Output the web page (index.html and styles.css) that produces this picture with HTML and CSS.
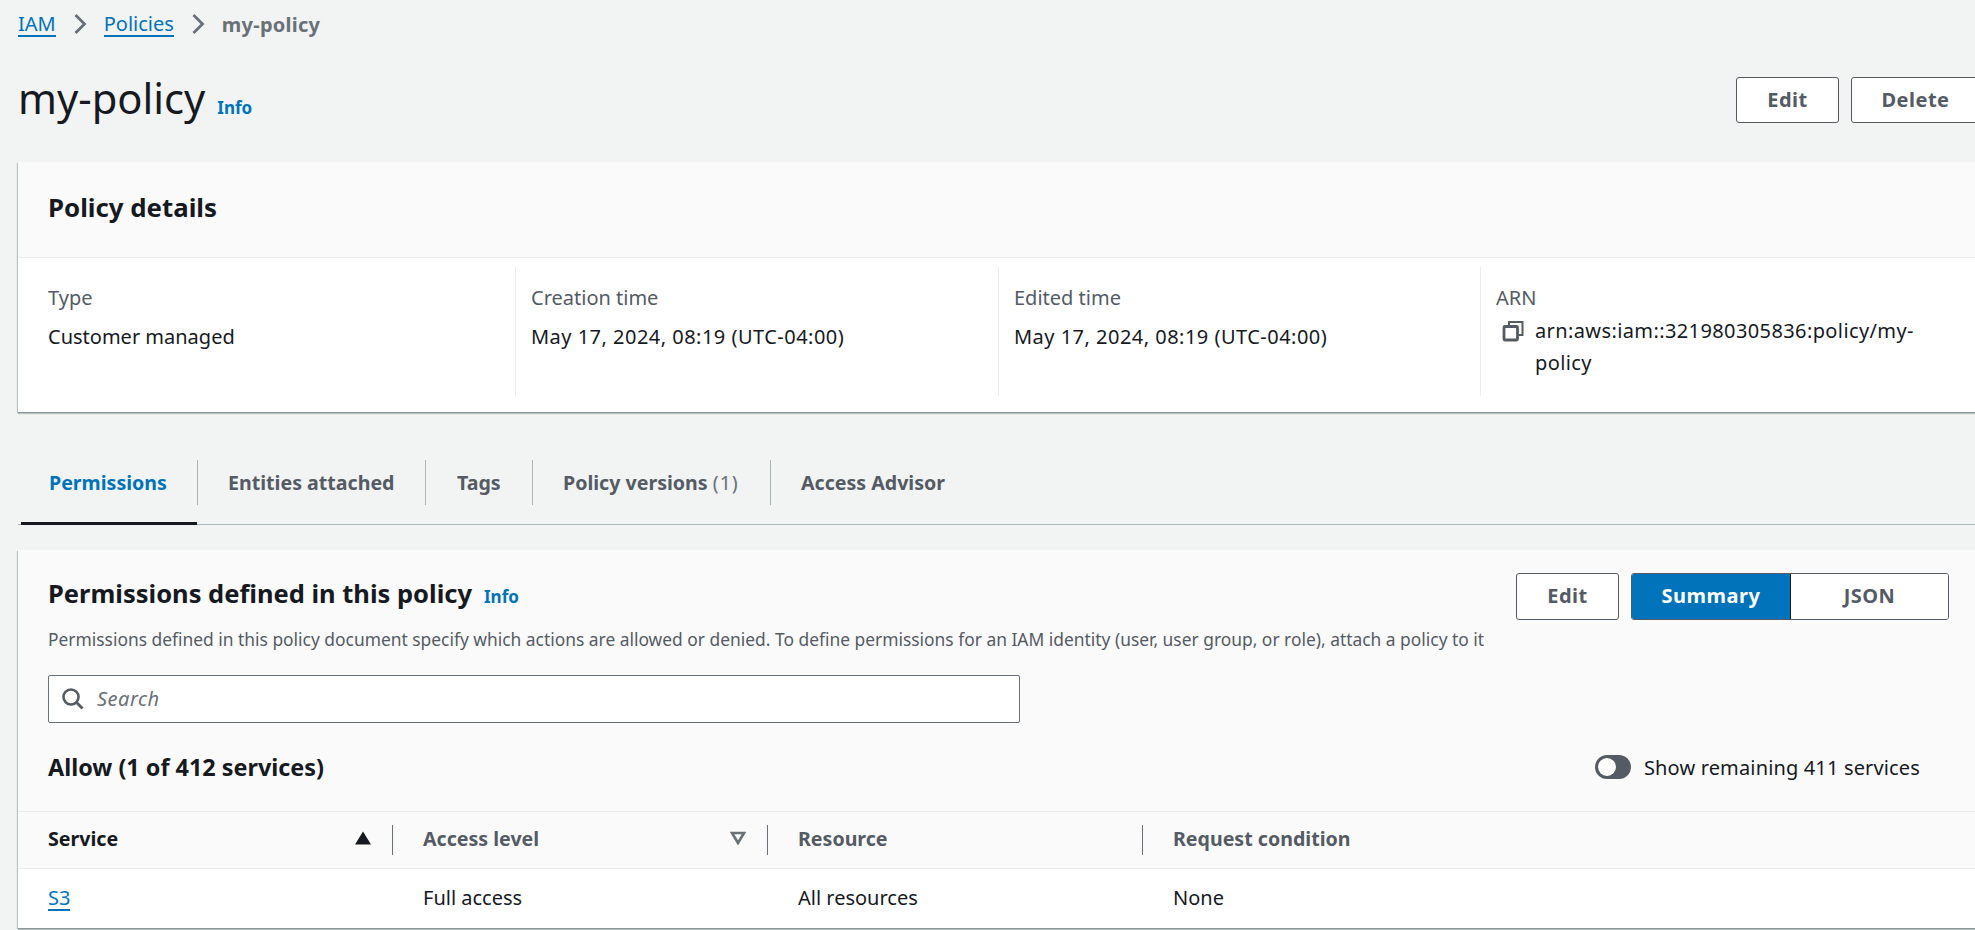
FILE: index.html
```html
<!DOCTYPE html>
<html lang="en">
<head>
<meta charset="utf-8">
<title>my-policy</title>
<link rel="stylesheet" href="styles.css">
</head>
<body>
<div class="page">
  <nav class="crumbs">
    <a class="link" href="#">IAM</a>
    <svg class="chev" viewBox="0 0 14 22"><path d="M2.5 2l9 9-9 9" fill="none" stroke="#687078" stroke-width="2.8"/></svg>
    <a class="link" href="#">Policies</a>
    <svg class="chev" viewBox="0 0 14 22"><path d="M2.5 2l9 9-9 9" fill="none" stroke="#687078" stroke-width="2.8"/></svg>
    <span class="crumb-current">my-policy</span>
  </nav>
  <header class="page-head">
    <div class="title-wrap"><h1 class="title">my-policy</h1><span class="info info-title">Info</span></div>
    <div class="head-actions"><button class="btn btn-edit">Edit</button><button class="btn btn-delete">Delete</button></div>
  </header>
  <section class="card details">
    <div class="card-head"><h2 class="h2 h2-details">Policy details</h2></div>
    <div class="cols">
      <div class="col"><div class="lbl">Type</div><div class="val">Customer managed</div></div>
      <div class="col"><div class="lbl">Creation time</div><div class="val val-date">May 17, 2024, 08:19 (UTC-04:00)</div></div>
      <div class="col"><div class="lbl">Edited time</div><div class="val val-date">May 17, 2024, 08:19 (UTC-04:00)</div></div>
      <div class="col col-arn"><div class="lbl">ARN</div>
        <div class="arn">
          <svg class="copy" viewBox="0 0 22 22"><path d="M7 6V2h13.5V15H16" fill="none" stroke="#545b64" stroke-width="2"/><rect x="2" y="6.5" width="13.5" height="13.5" rx="1" fill="none" stroke="#545b64" stroke-width="2.8"/></svg>
          <div class="arn-text">arn:aws:iam::321980305836:policy/my-<br>policy</div>
        </div>
      </div>
    </div>
  </section>
  <div class="tabs">
    <div class="tab tab-active tab-1"><span>Permissions</span></div>
    <div class="tab tab-2"><span>Entities attached</span></div>
    <div class="tab tab-3"><span>Tags</span></div>
    <div class="tab tab-4"><span>Policy versions <em class="count">(1)</em></span></div>
    <div class="tab tab-5"><span>Access Advisor</span></div>
  </div>
  <section class="card perms">
    <div class="perm-head">
      <div>
        <div class="perm-title"><h2 class="h2">Permissions defined in this policy</h2><span class="info info-perm">Info</span></div>
        <p class="desc">Permissions defined in this policy document specify which actions are allowed or denied. To define permissions for an IAM identity (user, user group, or role), attach a policy to it</p>
      </div>
      <div class="perm-actions">
        <button class="btn btn-edit2">Edit</button>
        <div class="seg"><button class="seg-btn seg-on">Summary</button><button class="seg-btn">JSON</button></div>
      </div>
    </div>
    <div class="search">
      <svg class="search-ico" viewBox="0 0 23 23"><circle cx="10" cy="10" r="7.5" fill="none" stroke="#545b64" stroke-width="2.6"/><path d="M15.5 15.5l6 6" stroke="#545b64" stroke-width="2.8"/></svg>
      <span class="search-ph">Search</span>
    </div>
    <div class="allow-row">
      <h3 class="allow">Allow (1 of 412 services)</h3>
      <div class="toggle-wrap"><span class="toggle"><i class="knob"></i></span><span class="toggle-label">Show remaining 411 services</span></div>
    </div>
    <div class="thead">
      <div class="th th-service"><span class="th-dark">Service</span><svg class="sort" viewBox="0 0 16 14"><path d="M8 0.5l8 13H0z" fill="#16191f"/></svg></div>
      <div class="th th-access"><span>Access level</span><svg class="sort" viewBox="0 0 16 14"><path d="M2 2h12L8 12z" fill="none" stroke="#687078" stroke-width="2.6"/></svg></div>
      <div class="th th-resource"><span>Resource</span></div>
      <div class="th th-cond"><span>Request condition</span></div>
    </div>
    <div class="trow">
      <div class="td td-service"><a class="link" href="#">S3</a></div>
      <div class="td td-access">Full access</div>
      <div class="td td-resource">All resources</div>
      <div class="td td-cond">None</div>
    </div>
  </section>
</div>
</body>
</html>
```
FILE: styles.css
```css
* { box-sizing: border-box; }
html, body { margin: 0; height: 930px; overflow: hidden; background: #f2f3f3; }
body { font-family: "Noto Sans", "Open Sans", sans-serif; font-size: 20px; color: #16191f; }
.page { width: 1962px; margin-left: 18px; }
.link { color: #0073bb; text-decoration: none; border-bottom: 2px solid #0073bb; line-height: 23px; display: inline-block; }
.crumbs { height: 48px; display: flex; align-items: center; }
.chev { width: 14px; height: 22px; margin: 0 17px; }
.crumb-current { color: #687078; font-weight: 700; letter-spacing: .25px; }
.page-head { display: flex; justify-content: space-between; align-items: center; height: 46px; margin-top: 29px; }
.title-wrap { display: flex; align-items: baseline; padding-bottom: 5px; }
.title { margin: 0; font-size: 41.7px; font-weight: 400; line-height: 46px; }
.info { color: #0073bb; font-weight: 700; font-size: 17px; }
.info-title { margin-left: 12px; }
.head-actions { display: flex; gap: 12px; }
.btn { height: 46px; background: #fff; border: 1px solid #545b64; border-radius: 3px; color: #545b64; font: 700 20px "Noto Sans", sans-serif; padding: 0 0 2px; letter-spacing: .5px; }
.btn-edit { width: 103px; }
.btn-delete { width: 129px; }
.card { background: #fff; box-shadow: 0 1px 0 #879596, 0 2px 1px rgba(0,28,36,.2), 1px 1px 1px rgba(0,28,36,.15), -1px 1px 1px rgba(0,28,36,.2); }
.details { margin-top: 39px; height: 250px; }
.card-head { height: 96px; background: #fafafa; border-bottom: 1px solid #eaeded; padding: 0 0 6px 30px; display: flex; align-items: center; }
.h2 { margin: 0; font-size: 25.5px; font-weight: 700; line-height: 30px; }
.h2-details { font-size: 25.8px; }
.cols { display: grid; grid-template-columns: 498px 483px 482px 482px; padding-top: 9px; }
.col { height: 129px; padding-left: 15px; padding-top: 16px; border-right: 1px solid #eaeded; }
.col:first-child { padding-left: 30px; }
.col-arn { border-right: 0; }
.lbl { color: #545b64; line-height: 30px; }
.val { line-height: 30px; margin-top: 9px; }
.val-date { letter-spacing: .48px; }
.arn { display: flex; align-items: flex-start; }
.copy { width: 22px; height: 22px; margin: 7px 11px 0 6px; flex: none; }
.arn-text { line-height: 32px; margin-top: 2px; letter-spacing: .39px; }
.tabs { display: flex; margin-top: 48px; height: 65px; border-bottom: 1px solid #aab7b8; padding-left: 3px; font-size: 19.6px; }
.tab { height: 65px; color: #545b64; font-weight: 700; }
.tab span { display: block; line-height: 45px; height: 45px; padding-left: 31px; border-right: 1px solid #aab7b8; white-space: nowrap; }
.tab-active { color: #0073bb; border-bottom: 3px solid #16191f; }
.tab-1 span { padding-left: 28px; width: 177px; }
.tab-1 { width: 176px; }
.tab-2 { width: 229px; }
.tab-3 { width: 107px; }
.tab-4 { width: 238px; }
.tab-4 span { padding-left: 30px; }
.tab-5 { width: 200px; }
.tab-5 span { border-right: 0; padding-left: 30px; }
.count { font-style: normal; font-weight: 400; color: #687078; letter-spacing: 1px; }
.perms { margin-top: 25px; height: 378px; background: #fafafa; }
.perm-head { display: flex; padding: 23px 31px 0 30px; justify-content: space-between; height: 125px; }
.perm-title { display: flex; align-items: baseline; line-height: 44px; height: 44px; margin-top: 2px; }
.info-perm { margin-left: 12px; }
.desc { margin: 9px 0 0; color: #545b64; font-size: 17.4px; line-height: 22px; white-space: nowrap; }
.perm-actions { display: flex; gap: 12px; height: 47px; }
.btn-edit2 { width: 103px; height: 47px; }
.seg { display: flex; height: 47px; width: 318px; border: 1px solid #545b64; border-radius: 3px; overflow: hidden; background: #fff; }
.seg-btn { flex: 1; border: 0; background: #fff; color: #545b64; font: 700 20px "Noto Sans", sans-serif; padding: 0 0 2px; letter-spacing: .5px; }
.seg-on { flex: 0 0 159px; background: #0073bb; color: #fff; border-right: 1px solid #16191f; }
.search { margin-left: 30px; width: 972px; height: 48px; background: #fff; border: 1px solid #687078; border-radius: 2px; display: flex; align-items: center; padding: 0 0 2px 12px; }
.search-ico { width: 23px; height: 23px; }
.search-ph { margin-left: 13px; color: #687078; font-style: italic; letter-spacing: .5px; }
.allow-row { display: flex; justify-content: space-between; align-items: center; height: 88px; padding: 0 60px 0 30px; }
.allow { margin: 0; font-size: 23.4px; font-weight: 700; }
.toggle-wrap { display: flex; align-items: center; gap: 13px; }
.toggle { width: 36px; height: 24px; border-radius: 12px; background: #545b64; display: flex; align-items: center; padding-left: 3px; }
.knob { width: 18px; height: 18px; border-radius: 50%; background: #fff; }
.toggle-label { letter-spacing: .15px; }
.thead { display: flex; height: 58px; border-top: 1px solid #eaeded; border-bottom: 1px solid #eaeded; align-items: center; font-size: 19.6px; }
.th { height: 30px; display: flex; align-items: center; justify-content: space-between; color: #545b64; font-weight: 700; border-right: 1px solid #687078; padding: 0 21px 4px 30px; }
.th-dark { color: #16191f; }
.sort { width: 16px; height: 14px; }
.th-service, .td-service { width: 375px; }
.th-access, .td-access { width: 375px; }
.th-resource, .td-resource { width: 375px; }
.th-cond, .td-cond { width: 500px; border-right: 0; }
.trow { display: flex; height: 59px; align-items: center; background: #fff; padding-bottom: 2px; }
.td { flex: none; padding-left: 30px; }
```
